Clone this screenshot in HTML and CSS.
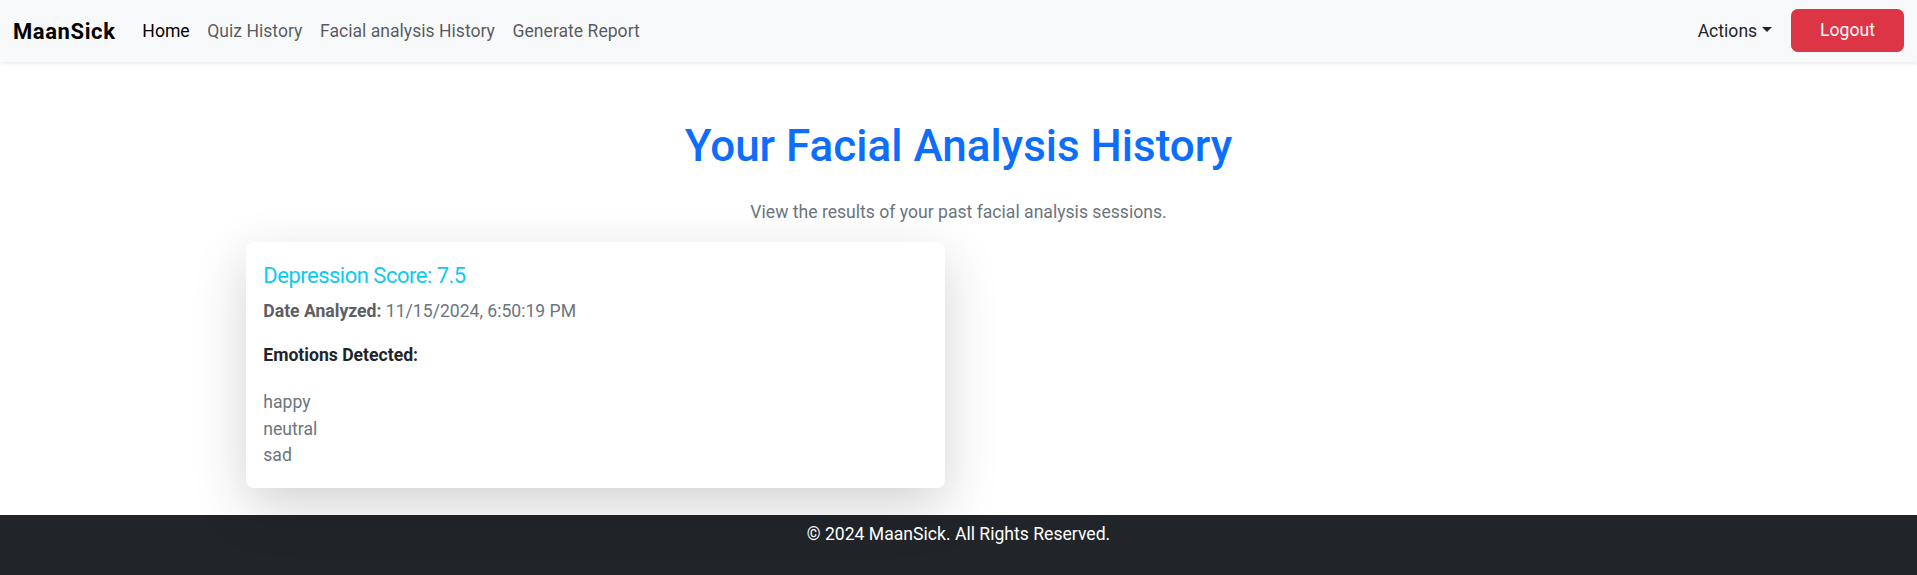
FILE: index.html
```html
<!DOCTYPE html>
<html lang="en">
<head>
<meta charset="utf-8">
<title>MaanSick - Facial Analysis History</title>
<link rel="stylesheet" href="styles.css">
</head>
<body>
<nav class="navbar">
  <div class="nav-inner">
    <a class="brand" href="#">MaanSick</a>
    <ul class="nav-links">
      <li><a class="nav-link active" href="#">Home</a></li>
      <li><a class="nav-link" href="#">Quiz History</a></li>
      <li><a class="nav-link" href="#">Facial analysis History</a></li>
      <li><a class="nav-link" href="#">Generate Report</a></li>
    </ul>
    <div class="nav-right">
      <a class="nav-link dropdown-toggle" href="#">Actions<span class="caret"></span></a>
      <button class="btn-logout" type="button">Logout</button>
    </div>
  </div>
</nav>

<main class="container">
  <h1 class="page-title">Your Facial Analysis History</h1>
  <p class="subtitle">View the results of your past facial analysis sessions.</p>
  <div class="row">
    <div class="col">
      <div class="card">
        <h5 class="card-title">Depression Score: 7.5</h5>
        <p class="card-text"><strong>Date Analyzed:</strong> 11/15/2024, 6:50:19 PM</p>
        <p class="emotions-label">Emotions Detected:</p>
        <ul class="emotions">
          <li>happy</li>
          <li>neutral</li>
          <li>sad</li>
        </ul>
      </div>
    </div>
  </div>
</main>

<footer class="footer">
  <p>© 2024 MaanSick. All Rights Reserved.</p>
</footer>
</body>
</html>
```

FILE: styles.css
```css
* { box-sizing: border-box; }

html, body {
  margin: 0;
  padding: 0;
}

body {
  font-family: "Roboto", "Liberation Sans", sans-serif;
  font-size: 17.6px;
  line-height: 1.5;
  color: #212529;
  background: #ffffff;
}

a { text-decoration: none; }

/* Navbar */
.navbar {
  background: #f8f9fa;
  height: 62px;
  box-shadow: 0 2px 4px rgba(0, 0, 0, 0.075);
  position: relative;
  z-index: 2;
}

.nav-inner {
  height: 100%;
  display: flex;
  align-items: center;
  padding: 0 13px 0 13px;
}

.brand {
  font-size: 22px;
  font-weight: 700;
  color: #000;
  margin-right: 18px;
  line-height: 1.5;
  letter-spacing: 0.6px;
}

.nav-links {
  display: flex;
  list-style: none;
  margin: 0;
  padding: 0;
}

.nav-link {
  display: inline-flex;
  align-items: center;
  padding: 9px 8.8px;
  color: rgba(33, 37, 41, 0.75);
  font-size: 17.6px;
}

.nav-link.active {
  color: #000;
}

.nav-right {
  margin-left: auto;
  display: flex;
  align-items: center;
  gap: 10px;
}

.dropdown-toggle {
  color: #212529;
}

.caret {
  display: inline-block;
  margin-left: 5px;
  width: 0;
  height: 0;
  border-top: 5.3px solid #212529;
  border-left: 5.3px solid transparent;
  border-right: 5.3px solid transparent;
  transform: translateY(-1px);
}

.btn-logout {
  font-family: inherit;
  font-size: 17.6px;
  line-height: 1.5;
  color: #fff;
  background: #dc3545;
  border: 1px solid #dc3545;
  border-radius: 6.6px;
  padding: 7px 19px 8px;
  width: 113px;
  height: 43px;
  cursor: pointer;
}

/* Main */
.container {
  width: 1452px;
  margin: 0 auto;
  padding: 0 13.2px;
}

.page-title {
  margin: 58px 0 0;
  text-align: center;
  font-size: 44px;
  font-weight: 500;
  line-height: 1.2;
  color: #0d6efd;
}

.subtitle {
  margin: 26px 0 17px;
  text-align: center;
  color: #6c757d;
}

.row {
  display: flex;
  margin: 0 -13.2px;
}

.col {
  width: 50%;
  padding: 0 13.2px;
}

.card {
  background: #fff;
  border-radius: 8px;
  box-shadow: 0 17.6px 52.8px rgba(0, 0, 0, 0.175);
  padding: 21px 17.6px 0;
  margin-bottom: 27px;
}

.card-title {
  margin: 0 0 8.5px;
  font-size: 22px;
  font-weight: 400;
  line-height: 1.2;
  letter-spacing: -0.5px;
  color: #0dcaf0;
}

.card-text {
  margin: 0 0 17.6px;
  color: #6c757d;
}

.card-text strong {
  font-weight: 700;
  color: #5c5f63;
}

.emotions-label {
  margin: 0 0 21px;
  font-weight: 700;
  color: #212529;
}

.emotions {
  list-style: none;
  margin: 0;
  padding: 0 0 19px;
  color: #6c757d;
}

/* Footer */
.footer {
  background: #212529;
  color: #fff;
  text-align: center;
  padding: 6px 0 30px;
}

.footer p {
  margin: 0;
}
```
